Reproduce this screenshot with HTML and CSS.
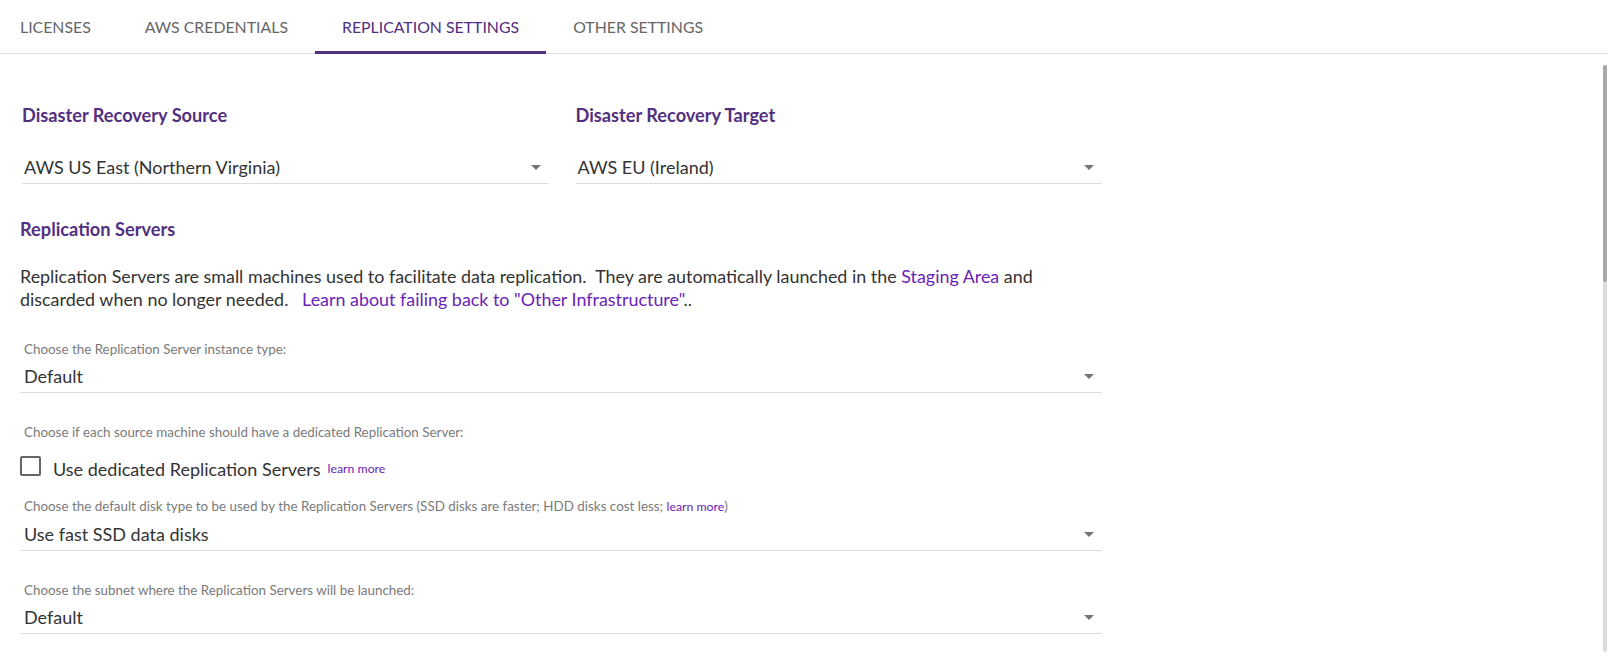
FILE: index.html
```html
<!DOCTYPE html>
<html lang="en">
<head>
<meta charset="utf-8">
<title>Replication Settings</title>
<link rel="stylesheet" href="styles.css">
</head>
<body>
<nav class="tabs">
  <div class="tab tab-first">LICENSES</div>
  <div class="tab">AWS CREDENTIALS</div>
  <div class="tab tab-active">REPLICATION SETTINGS</div>
  <div class="tab">OTHER SETTINGS</div>
</nav>
<main class="content">
  <div class="dr-row">
    <section class="dr-col">
      <h2 class="heading">Disaster Recovery Source</h2>
      <div class="select select-dr"><span class="select-value">AWS US East (Northern Virginia)</span><span class="arrow"></span></div>
    </section>
    <section class="dr-col">
      <h2 class="heading">Disaster Recovery Target</h2>
      <div class="select select-dr"><span class="select-value">AWS EU (Ireland)</span><span class="arrow"></span></div>
    </section>
  </div>

  <h2 class="heading heading-rs">Replication Servers</h2>
  <p class="desc">Replication Servers are small machines used to facilitate data replication.&nbsp; They are automatically launched in the <a class="link">Staging Area</a> and discarded when no longer needed.&nbsp;&nbsp; <a class="link">Learn about failing back to "Other Infrastructure"</a>..</p>

  <div class="field">
    <div class="label">Choose the Replication Server instance type:</div>
    <div class="select"><span class="select-value">Default</span><span class="arrow"></span></div>
  </div>

  <div class="field">
    <div class="label">Choose if each source machine should have a dedicated Replication Server:</div>
    <div class="check-row">
      <span class="box"></span>
      <span class="check-text">Use dedicated Replication Servers</span>
      <a class="small-link">learn more</a>
    </div>
  </div>

  <div class="field field-tight">
    <div class="label">Choose the default disk type to be used by the Replication Servers (SSD disks are faster; HDD disks cost less; <a class="small-link">learn more</a>)</div>
    <div class="select"><span class="select-value">Use fast SSD data disks</span><span class="arrow"></span></div>
  </div>

  <div class="field">
    <div class="label">Choose the subnet where the Replication Servers will be launched:</div>
    <div class="select"><span class="select-value">Default</span><span class="arrow"></span></div>
  </div>
</main>
<div class="scrollbar"><div class="scroll-thumb"></div></div>
</body>
</html>
```

FILE: styles.css
```css
* { box-sizing: border-box; }

html, body {
  margin: 0;
  padding: 0;
  height: 100%;
  overflow: hidden;
}

body {
  font-family: Lato, "Open Sans", "Liberation Sans", sans-serif;
  color: #333333;
  background: #ffffff;
}

.tabs {
  display: flex;
  height: 54px;
  border-bottom: 1px solid #e0e0e0;
}

.tab {
  position: relative;
  display: flex;
  align-items: center;
  padding: 0 27px;
  font-size: 15.85px;
  color: #666666;
}

.tab-first {
  padding-left: 20px;
}

.tab-active {
  color: #4f2d7f;
}

.tab-active::after {
  content: "";
  position: absolute;
  left: 0;
  right: 0;
  bottom: -1px;
  height: 3px;
  background: #55307f;
}

.content {
  width: 1102px;
  padding: 49px 0 0 20px;
}

.dr-row {
  display: grid;
  grid-template-columns: 1fr 1fr;
  column-gap: 27px;
  margin-left: 2px;
}

.heading {
  margin: 0;
  font-size: 18.2px;
  line-height: 24px;
  font-weight: 700;
  color: #53307f;
}

.select {
  position: relative;
  display: flex;
  align-items: center;
  justify-content: space-between;
  height: 29px;
  padding: 0 8px 4px 4px;
  border-bottom: 1px solid #dddddd;
  font-size: 18px;
  line-height: 24px;
  color: #333333;
}

.select-dr {
  margin-top: 28px;
  padding-left: 2px;
}

.arrow {
  width: 0;
  height: 0;
  border-left: 5px solid transparent;
  border-right: 5px solid transparent;
  border-top: 5px solid #757575;
}

.heading-rs {
  margin-top: 33px;
}

.desc {
  margin: 24px 0 0;
  font-size: 17.9px;
  line-height: 22.5px;
  color: #333333;
}

.link {
  color: #6a23b6;
  text-decoration: none;
}

.field {
  margin-top: 31px;
}

.label {
  padding-left: 4px;
  font-size: 13.4px;
  line-height: 16px;
  color: #7a7a7a;
}

.field .select {
  margin-top: 7px;
}

.small-link {
  font-size: 12.3px;
  color: #6a23b6;
  text-decoration: none;
}

.check-row {
  display: flex;
  align-items: flex-end;
  margin-top: 16px;
  height: 20px;
}

.box {
  width: 21px;
  height: 20px;
  border: 2px solid #666666;
  border-radius: 2px;
}

.check-text {
  margin-left: 12px;
  font-size: 18px;
  line-height: 14px;
  color: #333333;
}

.check-row .small-link {
  margin-left: 7px;
  line-height: 14px;
}

.field-tight {
  margin-top: 22px;
}

.scrollbar {
  position: absolute;
  top: 65px;
  right: 1px;
  width: 4px;
  height: 587px;
  border-radius: 2px;
  background: #dcdcdc;
}

.scroll-thumb {
  height: 217px;
  border-radius: 2px;
  background: #a8a8a8;
}
```
